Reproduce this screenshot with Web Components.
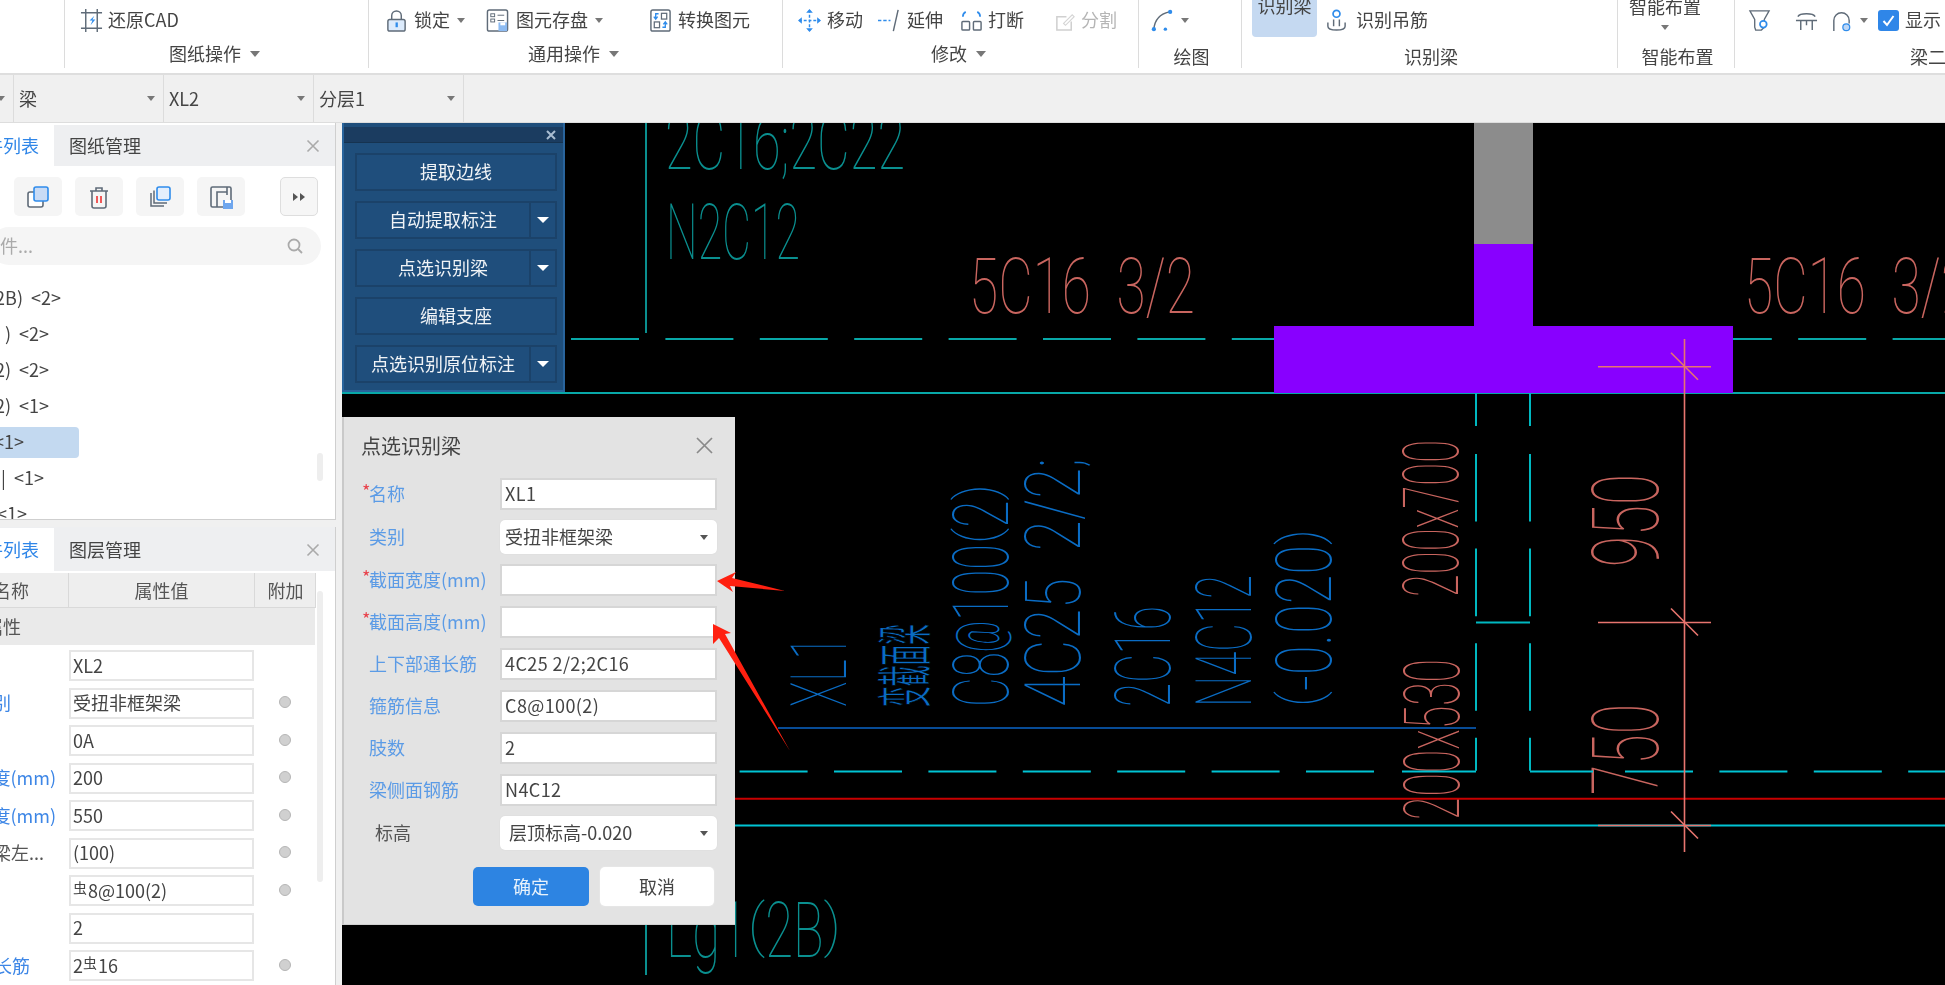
<!DOCTYPE html>
<html lang="zh"><head><meta charset="utf-8"><title>识别梁</title>
<style>
html,body{margin:0;padding:0;width:1945px;height:985px;overflow:hidden;background:#f0f0f0}
body{font:18px/1.2 "Noto Sans CJK SC","Noto Sans",sans-serif;color:#444;display:flex;flex-direction:column}
.r{font-size:14px;position:relative;top:-3px;margin-right:1px}
</style></head><body>
<app-ribbon>
  <rb-group w="64"></rb-group>
  <rb-group w="304" label="图纸操作" caret>
    <rb-item icon="crop" ml="15" gap="5">还原CAD</rb-item>
  </rb-group>
  <rb-group w="414" label="通用操作" caret>
    <rb-item icon="lock" ml="16" gap="6" caret>锁定</rb-item>
    <rb-item icon="store" ml="21" gap="7" caret>图元存盘</rb-item>
    <rb-item icon="swap" ml="46" gap="6">转换图元</rb-item>
  </rb-group>
  <rb-group w="356" label="修改" caret>
    <rb-item icon="move" ml="15" gap="6">移动</rb-item>
    <rb-item icon="extend" ml="15" gap="6">延伸</rb-item>
    <rb-item icon="break" ml="17" gap="5">打断</rb-item>
    <rb-item icon="split" ml="30" gap="4" disabled>分割</rb-item>
  </rb-group>
  <rb-group w="103" label="绘图" low>
    <rb-item icon="arc" ml="12" gap="0" caret></rb-item>
  </rb-group>
  <rb-group w="376" label="识别梁" low>
    <rb-hot ml="10">识别梁</rb-hot>
    <rb-item icon="hook" ml="8" gap="8">识别吊筋</rb-item>
  </rb-group>
  <rb-group w="117" label="智能布置" low>
    <rb-drop>智能布置</rb-drop>
  </rb-group>
  <rb-group w="211" label="梁二次编辑" low left>
    <rb-item icon="q1" ml="13" gap="0"></rb-item>
    <rb-item icon="q2" ml="24" gap="0"></rb-item>
    <rb-item icon="q3" ml="12" gap="0" caret></rb-item>
    <rb-check ml="10">显示</rb-check>
  </rb-group>
</app-ribbon>
<tb-bar>
  <tb-select w="14"></tb-select>
  <tb-select w="150">梁</tb-select>
  <tb-select w="150">XL2</tb-select>
  <tb-select w="150">分层1</tb-select>
</tb-bar>
<main-area>
  <left-col>
    <side-panel active="件列表" other="图纸管理" h="397">
      <tool-row>
        <tool-btn icon="copy1"></tool-btn><tool-btn icon="trash"></tool-btn><tool-btn icon="copy2"></tool-btn><tool-btn icon="layout"></tool-btn>
        <tool-btn icon="more" bordered></tool-btn>
      </tool-row>
      <search-box>件...</search-box>
      <list-row end="61">2B)  &lt;2&gt;</list-row>
      <list-row end="49">)  &lt;2&gt;</list-row>
      <list-row end="49">2)  &lt;2&gt;</list-row>
      <list-row end="49">2)  &lt;1&gt;</list-row>
      <list-row end="27" selected>&lt;1&gt;</list-row>
      <list-row end="44">|  &lt;1&gt;</list-row>
      <list-row end="27">&lt;1&gt;</list-row>
      <thin-bar top="330" h="28"></thin-bar>
    </side-panel>
    <side-panel active="件列表" other="图层管理" h="458" gapped>
      <prop-head></prop-head>
      <prop-group>属性</prop-group>
      <prop-row end="0" v="XL2" nodot></prop-row>
      <prop-row end="11" blue label="别" v="受扭非框架梁"></prop-row>
      <prop-row end="0" v="0A"></prop-row>
      <prop-row end="56" blue label="度(mm)" v="200"></prop-row>
      <prop-row end="56" blue label="度(mm)" v="550"></prop-row>
      <prop-row end="44" label="梁左..." v="(100)"></prop-row>
      <prop-row end="0"><span class="r">虫</span>8@100(2)</prop-row>
      <prop-row end="0" v="2" nodot></prop-row>
      <prop-row end="30" blue label="长筋">2<span class="r">虫</span>16</prop-row>
      <thin-bar top="64" h="291"></thin-bar>
    </side-panel>
  </left-col>
  <cad-canvas>
    <beam-panel>
      <panel-btn>提取边线</panel-btn>
      <panel-btn split>自动提取标注</panel-btn>
      <panel-btn split>点选识别梁</panel-btn>
      <panel-btn>编辑支座</panel-btn>
      <panel-btn split>点选识别原位标注</panel-btn>
    </beam-panel>
    <recog-dialog>
      <dlg-row req blue label="名称" v="XL1"></dlg-row>
      <dlg-row blue label="类别" v="受扭非框架梁" select></dlg-row>
      <dlg-row req blue label="截面宽度(mm)"></dlg-row>
      <dlg-row req blue label="截面高度(mm)"></dlg-row>
      <dlg-row blue label="上下部通长筋" v="4C25 2/2;2C16"></dlg-row>
      <dlg-row blue label="箍筋信息" v="C8@100(2)"></dlg-row>
      <dlg-row blue label="肢数" v="2"></dlg-row>
      <dlg-row blue label="梁侧面钢筋" v="N4C12"></dlg-row>
      <dlg-row label="标高" v="层顶标高-0.020" select wide></dlg-row>
    </recog-dialog>
    <red-arrows></red-arrows>
  </cad-canvas>
</main-area>
<script>
const G='#5f6b78',B='#2f8ceb',L='#d3e3f8';
const SOFT='filter:blur(.35px);';
const ICONS={
crop:`<path d="M6 0v24M18 0v24M1 4h22M1 20h22" stroke="${G}" stroke-width="1.5" fill="none"/><path d="M15 7l-5 5h3l-2 5 5-6h-3z" fill="${B}"/>`,
lock:`<path d="M7 11V7a5 5 0 0 1 10 0v4" stroke="${G}" stroke-width="1.5" fill="none"/><rect x="3" y="11" width="18" height="12" rx="2" fill="#dcebfc" stroke="${G}" stroke-width="1.5"/><rect x="11" y="14" width="2.4" height="5" fill="${B}"/>`,
store:`<rect x="1.5" y="1" width="21" height="22" rx="2" fill="none" stroke="${G}" stroke-width="1.5"/><rect x="5" y="5" width="4" height="3" fill="none" stroke="${G}"/><path d="M12 6.5h7M12 12h7" stroke="${G}"/><rect x="5" y="10.5" width="4" height="3" fill="none" stroke="${G}"/><rect x="13" y="14" width="9" height="9" fill="#8dbbf2"/><rect x="15" y="14" width="5" height="3" fill="#fff"/>`,
swap:`<rect x="2" y="1" width="20" height="22" rx="2" fill="none" stroke="${G}" stroke-width="1.5"/><rect x="13" y="4.5" width="5.5" height="6" fill="none" stroke="${G}" stroke-width="1.3"/><rect x="5.5" y="13.5" width="5.5" height="6" fill="none" stroke="${G}" stroke-width="1.3"/><path d="M10 5H7v5M5 8l2 2.5L9 8M14 19h3v-5M15 16l2-2.5 2 2.5" stroke="${B}" stroke-width="1.4" fill="none"/>`,
move:`<path d="M12 1v22M1 12h22" stroke="${B}" stroke-width="1.5" stroke-dasharray="3 2" fill="none"/><path d="M12 0l-3.5 4h7zM12 24l-3.5-4h7zM0 12l4-3.5v7zM24 12l-4-3.5v7z" fill="${B}"/>`,
extend:`<path d="M0 12h13" stroke="${B}" stroke-width="1.8" stroke-dasharray="3.5 2" fill="none"/><path d="M21 1L16 23" stroke="${G}" stroke-width="1.5"/>`,
break:`<rect x="2" y="13" width="8" height="9" rx="1" fill="none" stroke="${G}" stroke-width="1.5"/><rect x="14" y="13" width="8" height="9" rx="1" fill="none" stroke="${G}" stroke-width="1.5"/><path d="M3 8c0-2 1-4 3-5M21 8c0-2-1-4-3-5" stroke="${B}" stroke-width="1.8" fill="none"/>`,
split:`<path d="M18 13v9H3V8h10" stroke="#d0d0d0" stroke-width="1.6" fill="none"/><path d="M10 15l9-9 2 2-9 9z" stroke="#d5d5d5" stroke-width="1.2" fill="none"/>`,
arc:`<path d="M3 21C4 10 10 5 19 3" stroke="${G}" stroke-width="1.5" fill="none"/><circle cx="20" cy="3" r="2.2" fill="${B}"/><circle cx="3" cy="21" r="2.2" fill="${B}"/><circle cx="15" cy="21" r="1.8" fill="${B}"/>`,
hook:`<circle cx="12" cy="5" r="3.6" fill="none" stroke="${B}" stroke-width="1.8"/><path d="M3 14v4c0 3 3 4 9 4s9-1 9-4v-4M9 11v7M15 11v7" stroke="${G}" stroke-width="1.5" fill="none"/>`,
q1:`<path d="M2 2h20l-5 9v8l-3 3H8l-1-3V11z" fill="none" stroke="${G}" stroke-width="1.4"/><circle cx="16" cy="16" r="3.5" fill="#fff" stroke="${B}" stroke-width="1.8"/>`,
q2:`<path d="M3 8c2-4 16-4 18 0M1 12h22M6 12v10M18 12v10M12 12v5" stroke="${G}" stroke-width="1.5" fill="none"/>`,
q3:`<path d="M4 23V12a8 8 0 0 1 16 0v3" stroke="${G}" stroke-width="1.5" fill="none"/><circle cx="17" cy="19" r="3.6" fill="#bcd6f6" stroke="${B}" stroke-width="1.3"/>`,
copy1:`<rect x="2" y="7" width="15" height="15" rx="2" fill="#fff" stroke="${G}" stroke-width="1.6"/><rect x="8" y="2" width="14" height="14" rx="2" fill="#c9dbf5" stroke="${B}" stroke-width="1.6"/>`,
trash:`<path d="M3 6h18M9 6V3h6v3" stroke="${G}" stroke-width="1.6" fill="none"/><path d="M5 6v15a2 2 0 0 0 2 2h10a2 2 0 0 0 2-2V6" stroke="${G}" stroke-width="1.6" fill="none"/><path d="M10 11v7M14 11v7" stroke="#e33" stroke-width="1.6"/>`,
copy2:`<path d="M3 8v13h13M6 5.500v12.500h13" stroke="${G}" stroke-width="1.5" fill="none"/><rect x="9" y="2" width="13" height="13" rx="2" fill="#e3eefc" stroke="${B}" stroke-width="1.6"/>`,
layout:`<rect x="2" y="2" width="20" height="20" rx="1.5" fill="none" stroke="${G}" stroke-width="1.6"/><path d="M8 22V7h10M18 2v8" stroke="${G}" stroke-width="1.6" fill="none"/><rect x="14" y="15" width="10" height="9" fill="#6ea6ee"/><rect x="16" y="15" width="6" height="3" fill="#fff"/>`,
more:`<path d="M6 8l5 4-5 4zM13 8l5 4-5 4z" fill="#555"/>`
};
function def(name,css,html,init){
  customElements.define(name,class extends HTMLElement{
    constructor(){super();this.attachShadow({mode:'open'});}
    connectedCallback(){
      const a=n=>this.getAttribute(n),h=n=>this.hasAttribute(n);
      this.shadowRoot.innerHTML=`<style>${css}</style>`+(typeof html==='function'?html(a,h):html);
      if(init)init.call(this,a,h);
    }
  });
}
const icon=(n,s=24)=>`<svg width="${s}" height="${s}" viewBox="0 0 24 24" style="flex:none;display:block">${ICONS[n]||''}</svg>`;
const caret=`<i style="flex:none;display:block;width:0;height:0;border:4px solid transparent;border-top:5px solid #777;border-bottom:0"></i>`;
const caretL=`<i style="flex:none;display:block;width:0;height:0;border:5px solid transparent;border-top:6px solid #777;border-bottom:0"></i>`;

def('app-ribbon',`:host{display:flex;flex:none;height:73px;background:#fff;border-bottom:2px solid #dedede;overflow:hidden;${SOFT}}`,`<slot></slot>`);
def('rb-group',`:host{display:flex;flex-direction:column;flex:none;height:68px;box-sizing:border-box;border-left:1px solid #dcdcdc;overflow:hidden;position:relative}
 :host(:first-child){border-left:0}
 .top{display:flex;align-items:center;height:40px;flex:none}
 .lab{display:flex;align-items:center;justify-content:center;gap:9px;height:30px;color:#444;white-space:nowrap;box-sizing:border-box}
 .car{padding-right:4px}
 .low{padding:5px 0 0 3px;height:25px;box-sizing:content-box}
 .left{justify-content:flex-start;padding-left:175px}`,
 (a,h)=>`<div class="top"><slot></slot></div>${a('label')?`<div class="lab ${h('caret')?'car':''} ${h('low')?'low':''} ${h('left')?'left':''}"><span>${a('label')}</span>${h('caret')?caretL:''}</div>`:''}`,
 function(a){this.style.width=a('w')+'px'});
def('rb-item',`:host{display:flex;align-items:center;flex:none;white-space:nowrap;color:#444}
 :host([disabled]){color:#b5b5b5}
 .c{margin-left:7px}`,
 (a,h)=>`<span style="display:block;margin-right:${a('gap')}px">${icon(a('icon'),23)}</span><slot></slot>${h('caret')?`<span class="c">${caret}</span>`:''}`,
 function(a){this.style.marginLeft=a('ml')+'px'});
def('rb-hot',`:host{display:flex;flex:none;width:65px;height:37px;align-self:flex-start;background:#c5d9f1;border-radius:0 0 4px 4px;justify-content:center;align-items:center;white-space:nowrap;overflow:hidden}
 span{position:relative;top:-13px;font-size:18px;color:#444}`,`<span><slot></slot></span>`,function(a){this.style.marginLeft=a('ml')+'px'});
def('rb-drop',`:host{display:flex;flex-direction:column;align-items:center;gap:7px;margin:-14px 0 0 9px;width:76px;white-space:nowrap;color:#444}`,`<slot></slot>${caret}`);
def('rb-check',`:host{display:flex;align-items:center;gap:6px;margin-left:10px;white-space:nowrap;color:#444}
 b{display:flex;align-items:center;justify-content:center;width:21px;height:21px;border-radius:3px;background:#2f86e8;flex:none}`,
 `<b><svg width="15" height="15" viewBox="0 0 15 15"><path d="M2.500 8l3.500 4 6.500-9" stroke="#fff" stroke-width="2" fill="none"/></svg></b><slot></slot>`);
def('tb-bar',`:host{display:flex;flex:none;height:48px;background:#f0f0f0;box-sizing:border-box;border-bottom:1px solid #ddd;${SOFT}}`,`<slot></slot>`);
def('tb-select',`:host{display:flex;align-items:center;justify-content:space-between;flex:none;box-sizing:border-box;border-right:1px solid #dcdcdc;padding:0 8px 0 5px;color:#444}
 :host(:first-child){padding:0 8px 0 0;justify-content:flex-end}`,
 ()=>`<span><slot></slot></span>${caret}`,function(a){this.style.width=a('w')+'px'});
def('main-area',`:host{display:flex;flex:1;min-height:0}`,`<slot></slot>`);
def('left-col',`:host{display:flex;flex-direction:column;flex:none;width:336px;margin-right:6px;${SOFT}}`,`<slot></slot>`);
def('side-panel',`:host{display:block;position:relative;flex:none;background:#fff;box-sizing:border-box;border-right:1px solid #cfcfcf;border-bottom:1px solid #cfcfcf;overflow:hidden}
 :host([gapped]){margin-top:7px;border-bottom:0}
 .tabs{display:flex;height:41px;background:#eeeff1;margin-top:2px;align-items:center;box-sizing:border-box}
 :host([gapped]) .tabs{height:44px;margin-top:0;padding-top:1px}
 .act{display:flex;justify-content:flex-end;align-items:center;align-self:stretch;width:54px;background:#fff;overflow:hidden;white-space:nowrap;color:#2f86e8;padding-right:15px;box-sizing:border-box;flex:none}
 .oth{margin-left:15px;color:#444}
 .x{margin-left:auto;margin-right:15px;display:block}`,
 a=>`<div class="tabs"><div class="act">${a('active')}</div><div class="oth">${a('other')}</div><svg class="x" width="14" height="14" viewBox="0 0 14 14"><path d="M1.500 1.500l11 11M12.500 1.500l-11 11" stroke="#aaa" stroke-width="1.600"/></svg></div><slot></slot>`,
 function(a){this.style.height=a('h')+'px'});
def('tool-row',`:host{display:flex;gap:13px;padding:11px 0 0 14px;height:39px}`,`<slot></slot>`);
def('tool-btn',`:host{display:flex;align-items:center;justify-content:center;width:48px;height:39px;background:#f5f5f5;border-radius:5px;box-sizing:border-box;flex:none}
 :host([bordered]){width:38px;margin-left:22px;border:1px solid #dedede;background:#f6f6f6}`,
 a=>icon(a('icon'),24));
def('search-box',`:host{display:flex;align-items:center;justify-content:space-between;margin:11px 14px 15px -10px;height:38px;background:#f5f5f5;border-radius:19px;color:#aaa;padding:0 18px 0 0;overflow:hidden}
 span{display:block;width:43px;text-align:right;white-space:nowrap}`,
 `<span><slot></slot></span><svg width="16" height="16" viewBox="0 0 16 16"><circle cx="7" cy="7" r="5.500" fill="none" stroke="#aaa" stroke-width="1.800"/><path d="M11 11l4 4" stroke="#aaa" stroke-width="1.800"/></svg>`);
def('list-row',`:host{display:flex;height:36px;align-items:center;white-space:pre;box-sizing:border-box}
 .t{display:flex;justify-content:flex-end;align-items:center;overflow:hidden;height:31px;flex:none;border-radius:0 4px 4px 0}
 .sel{background:#c3d9f0;width:79px!important;justify-content:flex-start}`,
 (a,h)=>`<div class="t ${h('selected')?'sel':''}" style="width:${a('end')}px">${h('selected')?`<span style="margin-left:${a('end')-33}px">`:'<span>'}<slot></slot></span></div>`);
def('thin-bar',`:host{position:absolute;right:12px;width:6px;background:#eee;border-radius:3px}`,``,function(a){this.style.top=a('top')+'px';this.style.height=a('h')+'px'});
def('prop-head',`:host{display:grid;grid-template-columns:68px 186px 62px;width:316px;height:35px;margin-top:2px;background:#eee;box-sizing:border-box;border-bottom:1px solid #d9d9d9;color:#555;text-align:center;line-height:34px;border-right:1px solid #d9d9d9}
 div+div{border-left:1px solid #d9d9d9}
 .n{overflow:hidden;display:flex;justify-content:flex-end;padding-right:39px;white-space:nowrap}`,
 `<div class="n">名称</div><div>属性值</div><div>附加</div>`);
def('prop-group',`:host{display:flex;align-items:center;width:315px;height:37px;margin-bottom:5px;background:#eaeaea;color:#555;overflow:hidden;white-space:nowrap}
 span{display:block;margin-left:-15px}`,`<span><slot></slot></span>`);
def('prop-row',`:host{display:flex;align-items:center;height:31px;margin-bottom:6.500px;white-space:nowrap;color:#555}
 .l{width:68px;flex:none;display:flex}
 .e{overflow:hidden;display:flex;justify-content:flex-end;flex:none}
 .blue{color:#3d86e6}
 .v{box-sizing:border-box;width:185px;height:31px;flex:none;margin-left:1px;border:2px solid #e6e6e6;padding-left:2px;display:flex;align-items:center;background:#fff;color:#444}
 .d{width:12px;height:12px;border-radius:50%;background:#d0d0d0;border:1px solid #b5b5b5;margin:-2px 0 0 25px;box-sizing:border-box}`,
 (a,h)=>`<div class="l ${h('blue')?'blue':''}"><div class="e" style="width:${a('end')}px"><span style="flex:none">${a('label')||''}</span></div></div><div class="v">${a('v')||''}<slot></slot></div>${h('nodot')?'':'<i class="d"></i>'}`);
def('cad-canvas',`:host{display:block;flex:1;position:relative;background:#000;overflow:hidden}
 svg{display:block;position:absolute;left:0;top:0}`,
 ()=>{
  const unit=c=>'()'.includes(c)?.6:c==='@'?1.15:c===' '?1.1:'.;'.includes(c)?.5:c==='/'?.9:c==='1'?.8:1;
  const units=s=>[...s].reduce((n,c)=>n+unit(c),0);
  const one=(s,x,y,fs,len,fill,w,fam,ex)=>`<text x="${x}" y="${y}" font-family="${fam},sans-serif" font-weight="${w}" font-size="${fs}" textLength="${len}" lengthAdjust="spacingAndGlyphs" fill="${fill}" ${ex}>${s.replace(/ /g,'\u00a0\u00a0')}</text>`;
  const t=(s,x,y,fs,len,fill,w=100,fam='Roboto',ex='')=>{
    const total=units(s);let out='',cx=x;
    for(const part of s.split(/([()@])/).filter(Boolean)){
      const l=len*units(part)/total;
      if('()'.includes(part))out+=one(part,cx,y-12,58,l,fill,w,fam,ex);
      else if(part==='@')out+=one(part,cx,y-9,62,l,fill,w,fam,ex);
      else out+=one(part,cx,y,fs,l,fill,w,fam,ex);
      cx+=l;
    }
    return out;
  };
  const v=(s,x,y,fs,len,fill,w,fam,ex)=>`<g transform="translate(${x} ${y}) rotate(-90)">${t(s,0,0,fs,len,fill,w,fam,ex)}</g>`;
  const TE='#0a8f8f',RD='#c9655f',BL='#0a6cc4',CY='#00c4d4',TS=78;
  const ln=(x1,y1,x2,y2,c,w=1.6,ex='')=>`<line x1="${x1}" y1="${y1}" x2="${x2}" y2="${y2}" stroke="${c}" stroke-width="${w}" ${ex}/>`;
  const tick=(y)=>ln(1598,y,1711,y,'#e8756f')+ln(1671,y-14,1698,y+13,'#e8756f');
  return `<svg width="1603" height="862" viewBox="342 123 1603 862">
  ${ln(646,123,646,333,TE,2)}
  ${ln(646,925,646,975,TE,2)}
  ${ln(571,339,1945,339,'#08a8a8',2,'stroke-dasharray="68 26.400"')}
  ${ln(342,393,1945,393,'#08a8a8',2)}
  <rect x="1474" y="123" width="59" height="121" fill="#8c8c8c"/>
  <rect x="1474" y="244" width="59" height="82" fill="#8800ff"/>
  <rect x="1274" y="326" width="459" height="67" fill="#8800ff"/>
  ${t('2C16;2C22',665,169,TS,240,TE)}
  ${t('N2C12',666,259,TS,134,TE)}
  ${t('5C16 3/2',969,313,TS,226,RD)}
  ${t('5C16 3/2',1744,313,TS,226,RD)}
  ${t('Lg1(2B)',666,957,TS,175,TE)}
  ${v('XL1',846,707,TS,71,BL)}
  ${v('变截面梁',925,707,56,83,BL,400,"'Noto Sans CJK SC'",'stroke="#000" stroke-width="1"')}
  ${v('C8@100(2)',1008,707,TS,223,BL)}
  ${v('4C25 2/2;',1080,707,TS,249,BL)}
  ${v('2C16',1170,707,TS,101,BL)}
  ${v('N4C12',1250.500,707,TS,132,BL)}
  ${v('(-0.020)',1331,707,TS,178,BL)}
  ${v('200x700',1457.500,597,TS,157,RD)}
  ${v('200x530',1459,820,TS,161,RD)}
  ${v('950',1658,567,92,93,RD)}
  ${v('750',1658,795,92,91,RD)}
  ${ln(778,728,1476,728,'#0a64c8')}
  ${ln(1476,393,1476,771,'#00b8c0',2,'stroke-dasharray="33 28 67.600 27 67.600 27 67.600 27 33"')}
  ${ln(1530,393,1530,771,'#00b8c0',2,'stroke-dasharray="33 28 67.600 27 67.600 27 67.600 27 33"')}
  ${ln(1476,622.500,1530,622.500,'#00b8c0',2)}
  ${ln(739.600,771.500,1400,771.500,CY,2,'stroke-dasharray="68 26.400"')}
  ${ln(1402,771.500,1476,771.500,CY,2)}
  ${ln(1530,771.500,1593,771.500,CY,2)}
  ${ln(1625,771.500,1945,771.500,CY,2,'stroke-dasharray="68 26.400"')}
  ${ln(735,798.700,1945,798.700,'#c80000',2)}
  ${ln(735,825.500,1945,825.500,CY,2)}
  ${ln(1684.500,339,1684.500,852,'#e8756f')}
  ${tick(366.700)}${tick(622.500)}${tick(825.500)}
  </svg><slot></slot>`;
 });
def('beam-panel',`:host{position:absolute;left:0;top:0;width:223px;height:269px;box-sizing:border-box;background:#1f4e7b;border:2px solid #29649c;border-top:0;display:flex;flex-direction:column;gap:10px;padding:30px 0 0 11px;${SOFT}}
 .h{position:absolute;left:0;right:0;top:4px;height:15px;background:#1b3c60;border-bottom:1px solid #163350}
 svg{position:absolute;right:7px;top:7px}`,
 `<div class="h"></div><svg width="10" height="10" viewBox="0 0 10 10"><path d="M1 1l8 8M9 1l-8 8" stroke="#a9bdd2" stroke-width="2"/></svg><slot></slot>`);
def('panel-btn',`:host{display:flex;width:202px;height:38px;box-sizing:border-box;background:#1f4e7c;border:2px solid #1b4269;color:#f0f3f6;flex:none}
 .m{flex:1;display:flex;align-items:center;justify-content:center;white-space:nowrap}
 .s{width:24px;border-left:2px solid #1b4269;display:flex;align-items:center;justify-content:center;flex:none}
 .s i{width:0;height:0;border:6px solid transparent;border-top:6px solid #fff;border-bottom:0}`,
 (a,h)=>`<div class="m"><slot></slot></div>${h('split')?'<div class="s"><i></i></div>':''}`);
def('recog-dialog',`:host{position:absolute;left:0;top:294px;width:393px;height:508px;box-sizing:border-box;background:#e3e3e3;border-left:2px solid #c9c9c9;border-bottom:1px solid #d0d0d0;display:flex;flex-direction:column;${SOFT}}
 .t{display:flex;align-items:center;height:57px;margin-bottom:4px;padding:0 22px 0 17px;justify-content:space-between;font-size:20px;color:#444;flex:none}
 .rows{display:flex;flex-direction:column;gap:10px}
 .b{display:flex;gap:11px;margin:17px 0 0 129px}
 button{font:inherit;width:116px;height:39px;border:0;border-radius:5px;background:#2d84e2;color:#e8f2fc;padding:0}
 button+button{width:114px;background:#fff;color:#444;box-shadow:0 0 0 1px #e6e6e6}`,
 `<div class="t"><span>点选识别梁</span><svg width="17" height="17" viewBox="0 0 17 17"><path d="M1 1l15 15M16 1L1 16" stroke="#8a8a8a" stroke-width="1.700"/></svg></div><div class="rows"><slot></slot></div><div class="b"><button>确定</button><button>取消</button></div>`);
def('dlg-row',`:host{display:flex;align-items:center;height:32px;white-space:nowrap;color:#555}
 :host([select]){height:34px}
 .l{width:156px;flex:none;display:flex;box-sizing:border-box;padding-left:25px;position:relative}
 .blue{color:#5b9be6}
 .star{color:#e8414a;position:absolute;left:18px;top:-3px}
 .dark{padding-left:31px}
 .v{box-sizing:border-box;width:217px;height:32px;border:2px solid #d6d6d6;background:#fff;display:flex;align-items:center;padding-left:3px;color:#444;flex:none;letter-spacing:.4px}
 .sel{height:34px;border:0;border-radius:5px;justify-content:space-between;padding:0 9px 0 5px;box-shadow:0 0 1px #ccc;letter-spacing:0}
 .wide{padding-left:9px}
 i{width:0;height:0;border:4px solid transparent;border-top:5px solid #555;border-bottom:0}`,
 (a,h)=>`<div class="l ${h('blue')?'blue':'dark'}">${h('req')?'<span class="star">*</span>':''}<span>${a('label')}</span></div><div class="v ${h('select')?'sel':''} ${h('wide')?'wide':''}"><span>${a('v')||''}</span>${h('select')?'<i></i>':''}</div>`);
def('red-arrows',`:host{position:absolute;left:0;top:0;width:0;height:0}
 svg{position:absolute;left:0;top:0;overflow:visible}`,
 `<svg width="1603" height="862" viewBox="342 123 1603 862"><polygon points="717,581 736,572 732,578 785,591 730,586 733,592" fill="#ff2010"/><polygon points="713,624 731,633 725,634 790,751 719,638 713,644" fill="#ff2010"/></svg>`);
</script>
</body></html>
